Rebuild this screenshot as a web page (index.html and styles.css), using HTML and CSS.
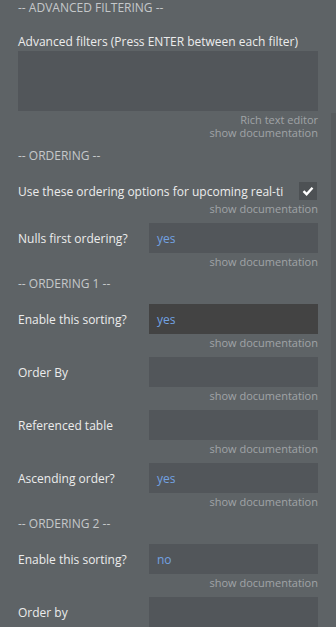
FILE: index.html
```html
<!DOCTYPE html>
<html>
<head>
<meta charset="utf-8">
<link rel="stylesheet" href="styles.css">
</head>
<body>
<div class="panel">
  <div class="section first">-- ADVANCED FILTERING --</div>
  <div class="label-top">Advanced filters (Press ENTER between each filter)</div>
  <div class="textarea"></div>
  <div class="doc rte">Rich text editor</div>
  <div class="doc tight">show documentation</div>

  <div class="section after-rte">-- ORDERING --</div>
  <div class="row check-row">
    <div class="label wide">Use these ordering options for upcoming real-time changes</div>
    <div class="checkbox">
      <svg width="12" height="10" viewBox="0 0 12 10"><path d="M1.5 5.2 L4.6 8.2 L10.5 1.8" fill="none" stroke="#ffffff" stroke-width="2.4"/></svg>
    </div>
  </div>
  <div class="doc up">show documentation</div>

  <div class="row"><div class="label">Nulls first ordering?</div><div class="input"><span class="val">yes</span></div></div>
  <div class="doc">show documentation</div>

  <div class="section">-- ORDERING 1 --</div>
  <div class="row"><div class="label">Enable this sorting?</div><div class="input focused"><span class="val">yes</span></div></div>
  <div class="doc">show documentation</div>
  <div class="row"><div class="label">Order By</div><div class="input"></div></div>
  <div class="doc">show documentation</div>
  <div class="row"><div class="label">Referenced table</div><div class="input"></div></div>
  <div class="doc">show documentation</div>
  <div class="row"><div class="label">Ascending order?</div><div class="input"><span class="val">yes</span></div></div>
  <div class="doc">show documentation</div>

  <div class="section">-- ORDERING 2 --</div>
  <div class="row"><div class="label">Enable this sorting?</div><div class="input"><span class="val">no</span></div></div>
  <div class="doc">show documentation</div>
  <div class="row"><div class="label">Order by</div><div class="input"></div></div>
</div>
<div class="scrollbar"></div>
</body>
</html>
```

FILE: styles.css
```css
html, body {
  margin: 0;
  padding: 0;
  background: #5e6366;
  height: 100%;
  overflow: hidden;
}
body {
  font-family: "Open Sans", "Noto Sans", sans-serif;
  position: relative;
}
.panel {
  padding: 0 18px;
  width: 300px;
}
.section {
  color: #c5c8ca;
  font-size: 12px;
  line-height: 20px;
  margin: 5px 0 10px;
}
.section.first {
  margin-top: -2px;
  margin-bottom: 16px;
}
.section.after-rte {
  margin-top: 7px;
}
.label-top {
  color: #ececec;
  font-size: 12px;
  line-height: 16px;
  margin-bottom: 1px;
  white-space: nowrap;
}
.textarea {
  height: 60px;
  background: #52565a;
}
.doc {
  color: #a0a3a6;
  font-size: 11px;
  line-height: 14px;
  text-align: right;
  margin-top: 2px;
}
.doc.rte {
  line-height: 13px;
}
.doc.tight {
  margin-top: 0;
  line-height: 13px;
}
.doc.up {
  margin-top: -4px;
}
.row {
  display: flex;
  align-items: center;
  height: 30px;
  margin-top: 7px;
}
.label {
  width: 131px;
  flex: none;
  color: #ececec;
  font-size: 12px;
  white-space: nowrap;
}
.label.wide {
  width: 265px;
  overflow: hidden;
}
.check-row {
  justify-content: space-between;
}
.checkbox {
  width: 18px;
  height: 18px;
  background: #4d5154;
  display: flex;
  align-items: center;
  justify-content: center;
  margin-right: 1px;
}
.input {
  flex: 1;
  height: 30px;
  background: #52565a;
  display: flex;
  align-items: center;
  padding-left: 8px;
}
.input.focused {
  background: #434343;
}
.val {
  color: #72a2e2;
  font-size: 12px;
}
.scrollbar {
  position: absolute;
  left: 331px;
  top: 113px;
  width: 5px;
  height: 327px;
  background: #575b5e;
}
```
